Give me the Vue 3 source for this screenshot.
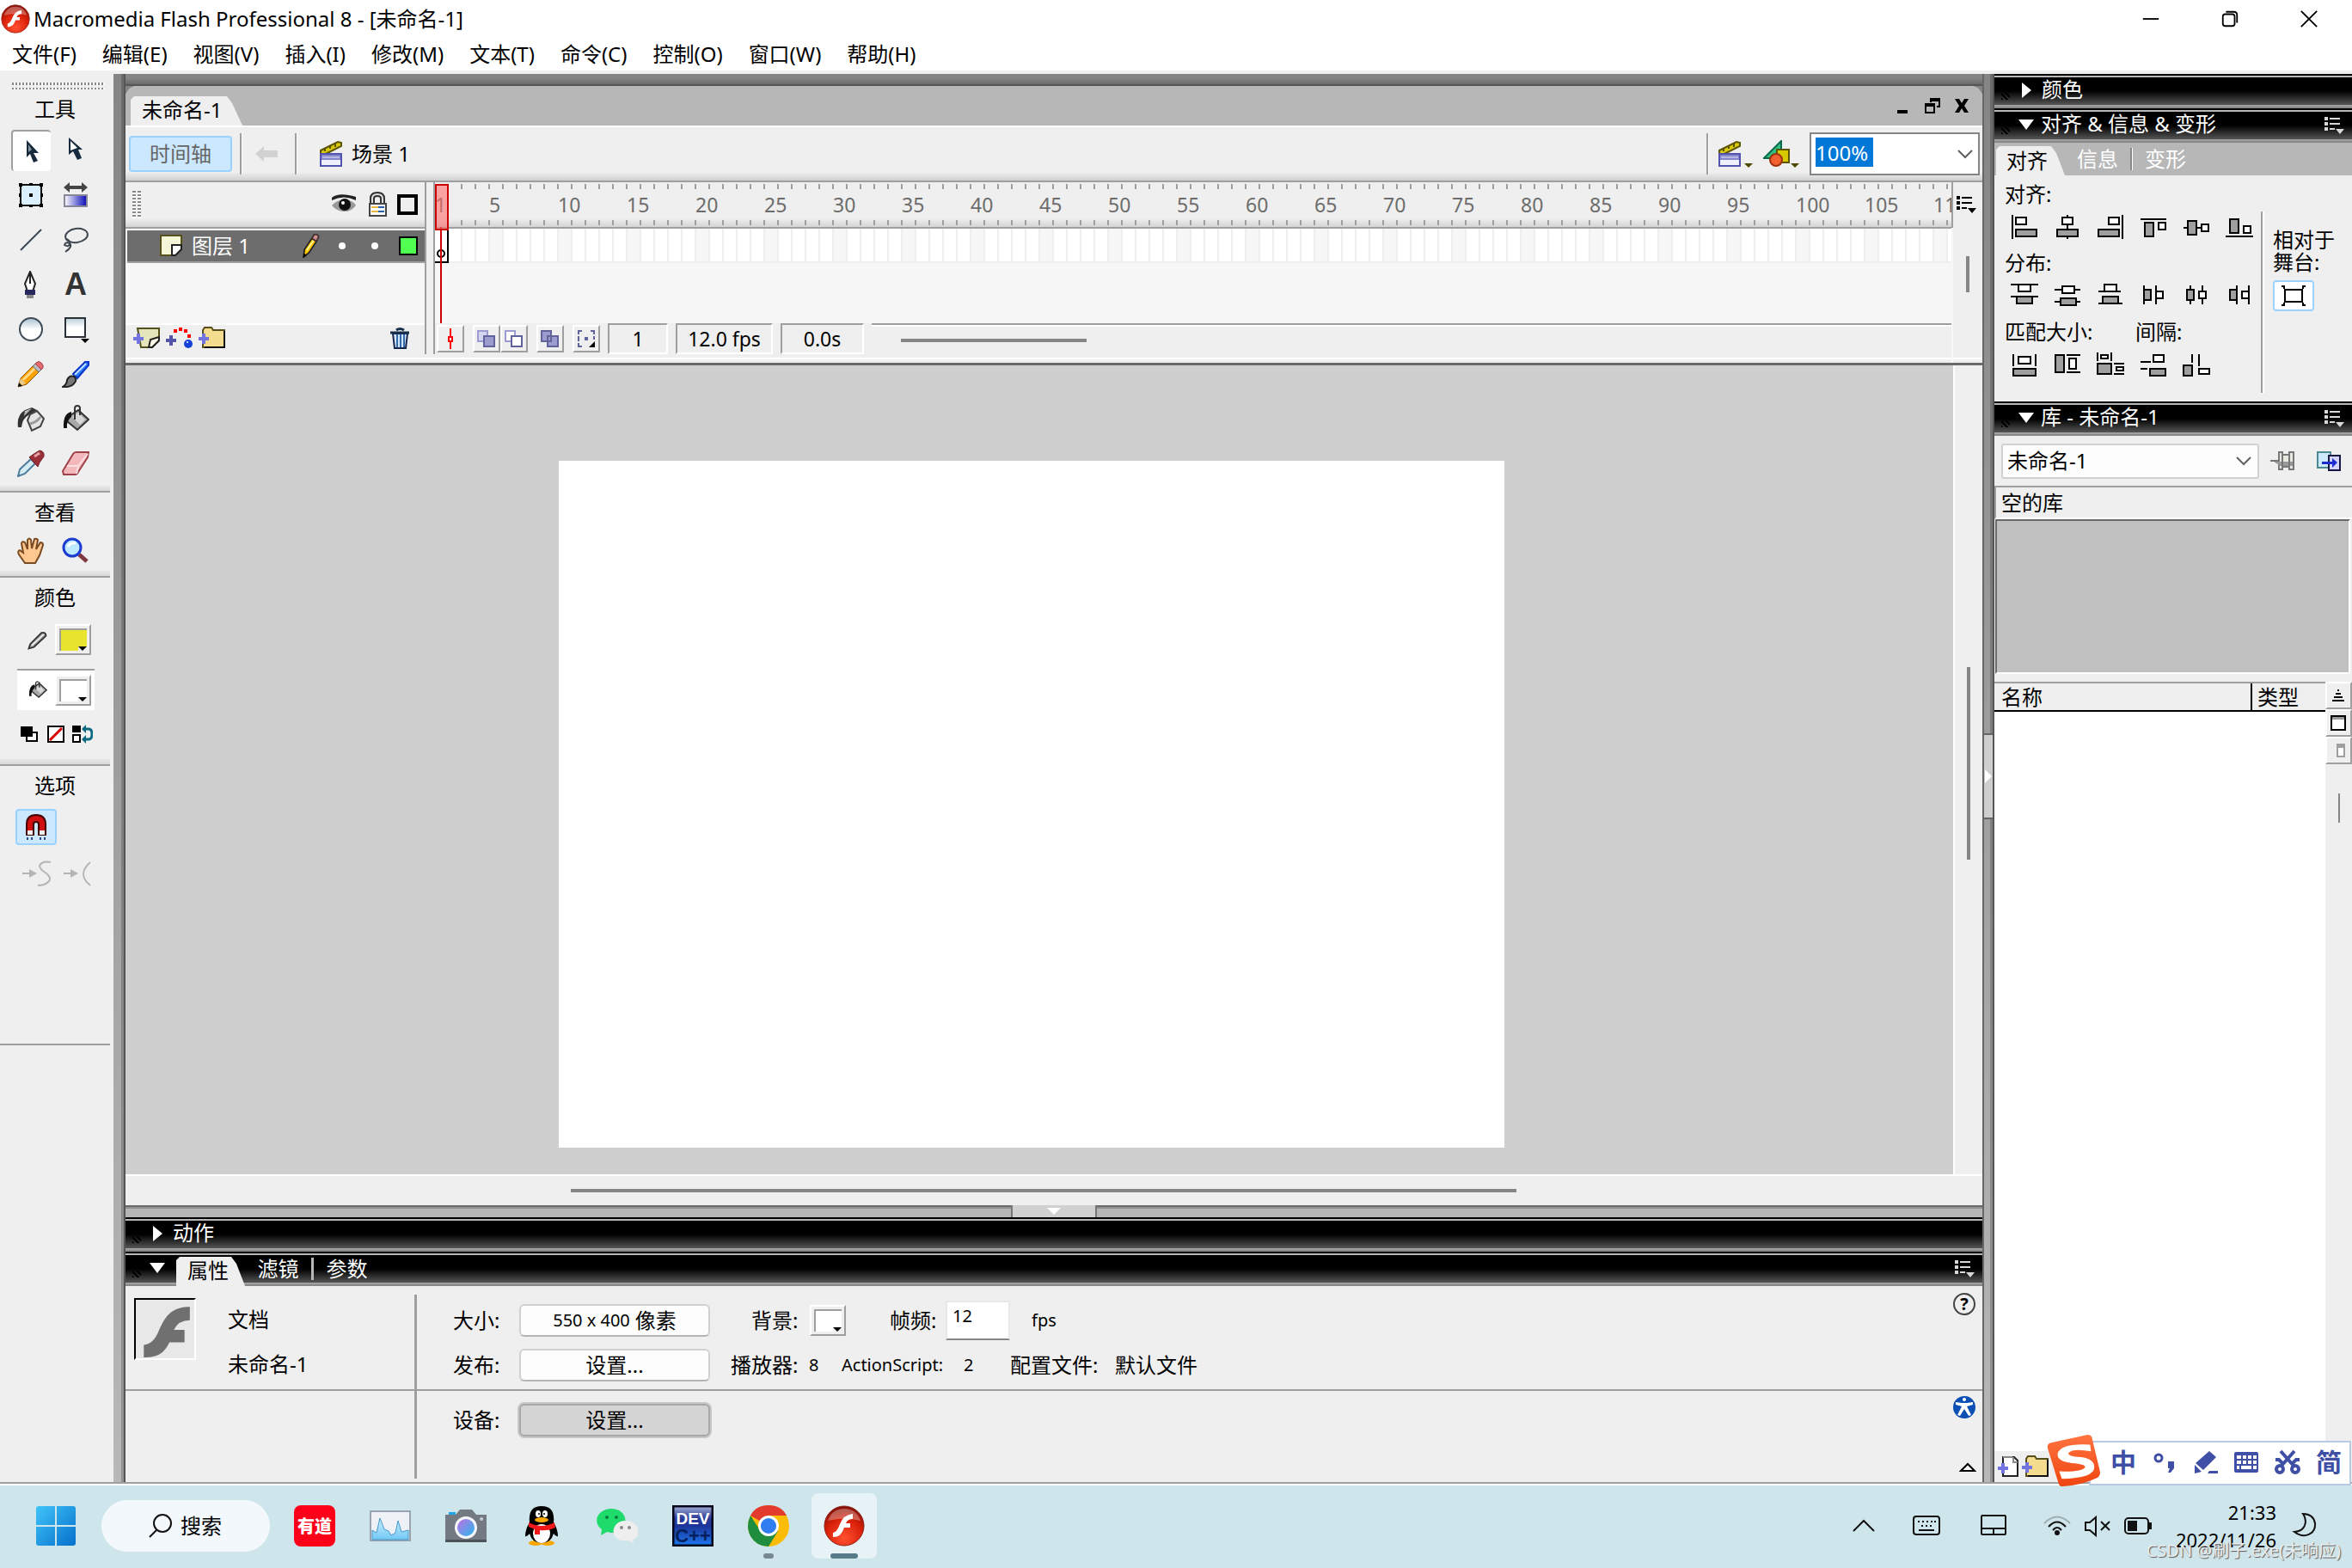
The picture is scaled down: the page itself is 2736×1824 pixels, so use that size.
<template>
  <div class="app">
    <header class="title-bar">
      <svg class="i34" viewBox="0 0 48 48" v-html="icons.flash"></svg>
      <h1>Macromedia Flash Professional 8 - [未命名-1]</h1>
      <div class="window-buttons">
        <button aria-label="最小化"><svg viewBox="0 0 24 24"><path d="M2 12h20" /></svg></button>
        <button aria-label="还原"><svg viewBox="0 0 24 24"><rect x="3" y="6" width="15" height="15" rx="3" /><path d="M7 3h10q4 0 4 4v10" /></svg></button>
        <button aria-label="关闭"><svg viewBox="0 0 24 24"><path d="M2 2l20 20M22 2L2 22" /></svg></button>
      </div>
    </header>
    <nav class="menu-bar">
      <button v-for="m in menus" :key="m">{{ m }}</button>
    </nav>

    <div class="workspace">
      <!-- 工具箱 -->
      <aside class="toolbox">
        <div class="grip-h"></div>
        <h2>工具</h2>
        <div class="tool-grid">
          <button v-for="t in tools" :key="t.icon" :class="{ active: t.active }" :aria-label="t.label">
            <span v-if="t.icon === 'text'" class="letter-tool">A</span>
            <svg v-else class="i32" viewBox="0 0 32 32" v-html="icons[t.icon]"></svg>
          </button>
        </div>
        <div class="sep"></div>
        <h2>查看</h2>
        <div class="tool-grid view-grid">
          <button aria-label="手形工具"><svg class="i32" viewBox="0 0 32 32" v-html="icons.hand"></svg></button>
          <button aria-label="缩放工具"><svg class="i32" viewBox="0 0 32 32" v-html="icons.zoom"></svg></button>
        </div>
        <div class="sep"></div>
        <h2>颜色</h2>
        <div class="color-row">
          <svg class="i28" viewBox="0 0 32 32" v-html="icons.stroke"></svg>
          <button class="swatch yellow" aria-label="笔触颜色"><i></i></button>
        </div>
        <div class="color-row fill">
          <svg class="i28" viewBox="0 0 32 32" v-html="icons.bucketSmall"></svg>
          <button class="swatch" aria-label="填充颜色"><i></i></button>
        </div>
        <div class="mini-row">
          <button aria-label="黑白"><svg class="i24" viewBox="0 0 24 24" v-html="icons.bw"></svg></button>
          <button aria-label="没有颜色"><svg class="i24" viewBox="0 0 24 24" v-html="icons.none"></svg></button>
          <button aria-label="交换颜色"><svg class="i24" viewBox="0 0 24 24" v-html="icons.swap"></svg></button>
        </div>
        <div class="sep"></div>
        <h2>选项</h2>
        <button class="magnet" aria-label="贴紧至对象"><svg class="i32" viewBox="0 0 32 32" v-html="icons.magnet"></svg></button>
        <div class="mini-row smooth-row">
          <button aria-label="平滑"><svg class="i34" viewBox="0 0 34 34" v-html="icons.smooth"></svg></button>
          <button aria-label="伸直"><svg class="i34" viewBox="0 0 34 34" v-html="icons.straight"></svg></button>
        </div>
        <div class="toolbox-end"></div>
      </aside>

      <div class="gutter"></div>

      <main class="center">
        <div class="frame-top"></div>
        <section class="doc">
          <div class="doc-tabs">
            <div class="doc-tab">未命名-1</div>
            <div class="doc-buttons">
              <button aria-label="最小化文档"><svg class="i20" viewBox="0 0 20 20"><path d="M3 15h12v4H3z" /></svg></button>
              <button aria-label="还原文档"><svg class="i20" viewBox="0 0 20 20"><path d="M7 1h12v11h-4v-2h2V5H9v1H7zM1 7h12v12H1zm2 4v6h8v-6z" fill-rule="evenodd" /></svg></button>
              <button aria-label="关闭文档"><svg class="i20" viewBox="0 0 20 20"><path d="M2 2h5l3 5 3-5h5l-5 8 5 8h-5l-3-5-3 5H2l5-8z" /></svg></button>
            </div>
          </div>

          <div class="edit-bar">
            <button class="timeline-toggle">时间轴</button>
            <div class="vline"></div>
            <button class="back" aria-label="后退"><svg class="i28" viewBox="0 0 28 28"><path d="M1 14l10-9v5h16v8H11v5z" fill="#d2d2d2" /></svg></button>
            <div class="vline"></div>
            <svg class="i32 scene-icon" viewBox="0 0 32 32" v-html="icons.clap"></svg>
            <span class="scene-name">场景 1</span>
            <div class="spacer"></div>
            <div class="vline"></div>
            <button class="drop" aria-label="编辑场景"><svg class="i32" viewBox="0 0 32 32" v-html="icons.clap"></svg><i></i></button>
            <button class="drop" aria-label="编辑元件"><svg class="i32" viewBox="0 0 32 32" v-html="icons.symbols"></svg><i></i></button>
            <div class="zoom-box">
              <input type="text" v-model="zoom" aria-label="缩放比例">
              <button aria-label="选择缩放比例"><svg class="i20" viewBox="0 0 20 20" v-html="icons.chevron"></svg></button>
            </div>
          </div>

          <div class="timeline">
            <div class="layers">
              <div class="layer-head">
                <div class="grip-v"></div>
                <svg class="i32" viewBox="0 0 32 32" v-html="icons.eye"></svg>
                <svg class="i32" viewBox="0 0 32 32" v-html="icons.lock"></svg>
                <div class="outline-box"></div>
              </div>
              <div class="layer-row">
                <svg class="i28" viewBox="0 0 28 28" v-html="icons.page"></svg>
                <span class="layer-name">图层 1</span>
                <svg class="i28" viewBox="0 0 28 32" v-html="icons.layerPencil"></svg>
                <b class="dot"></b>
                <b class="dot"></b>
                <div class="layer-color"></div>
              </div>
              <div class="layer-space"></div>
              <div class="layer-foot">
                <button aria-label="插入图层"><svg class="i32" viewBox="0 0 32 28" v-html="icons.newLayer"></svg></button>
                <button aria-label="添加运动引导层"><svg class="i32" viewBox="0 0 32 28" v-html="icons.guide"></svg></button>
                <button aria-label="插入图层文件夹"><svg class="i32" viewBox="0 0 32 28" v-html="icons.newFolder"></svg></button>
                <div class="spacer"></div>
                <button aria-label="删除图层"><svg class="i28" viewBox="0 0 28 28" v-html="icons.trash"></svg></button>
              </div>
            </div>
            <div class="frames">
              <div class="frames-clip">
                <div class="ruler">
                  <span v-for="n in frameNumbers" :key="n" :class="{ first: n === 1 }">{{ n }}</span>
                </div>
                <div class="frame-cells"><div class="keyframe"><b></b></div></div>
                <div class="frames-space"></div>
                <div class="playhead"></div>
              </div>
              <div class="frames-foot">
                <button class="foot-btn" aria-label="滚动到播放头"><svg class="i28" viewBox="0 0 28 28"><path d="M13 2h2v9h2v7h-2v8h-2v-8h-2v-7h2zM13 13v3h2v-3z" fill="#f00" fill-rule="evenodd" /></svg></button>
                <button class="foot-btn gap" aria-label="绘图纸外观"><svg class="i28" viewBox="0 0 28 28"><path d="M4 5h11v12H4z" fill="#d5d5f2" stroke="#9c9cd2" stroke-width="2" /><path d="M11 11h12v12H11z" fill="#9c9cce" stroke="#63639c" stroke-width="2" /></svg></button>
                <button class="foot-btn" aria-label="绘图纸外观轮廓"><svg class="i28" viewBox="0 0 28 28"><path d="M4 5h11v12H4z" fill="#fff" stroke="#9c9cd2" stroke-width="2" /><path d="M11 11h12v12H11z" fill="#fff" stroke="#63639c" stroke-width="2" /></svg></button>
                <button class="foot-btn gap" aria-label="编辑多个帧"><svg class="i28" viewBox="0 0 28 28"><path d="M4 5h11v12H4zM11 11h12v12H11z" fill="#9c9cce" stroke="#63639c" stroke-width="2" /></svg></button>
                <button class="foot-btn gap" aria-label="修改绘图纸标记"><svg class="i28" viewBox="0 0 28 28"><path d="M9 5H5v4M5 11v6M5 19v4h4M19 5h4v4M23 11v4" fill="none" stroke="#63639c" stroke-width="2" /><path d="M12 12h4v4h-4z" fill="#63639c" /><path d="M24 17v7h-7z" /></svg></button>
                <output class="readout frame-no">1</output>
                <output class="readout fps-no">12.0 fps</output>
                <output class="readout time-no">0.0s</output>
                <div class="h-track"><div class="h-thumb"></div></div>
              </div>
            </div>
            <div class="timeline-side">
              <svg class="i24" viewBox="0 0 24 24" v-html="icons.options"></svg>
              <div class="v-thumb"></div>
            </div>
          </div>

          <div class="stage-row">
            <div class="stage"><div class="page"></div></div>
            <div class="v-scroll"><div class="v-thumb"></div></div>
          </div>
          <div class="h-scroll"><div class="h-thumb"></div></div>
        </section>

        <div class="splitter"><button aria-label="折叠面板"></button></div>

        <section>
          <div class="panel-head"><em></em><i class="tri right"></i><h2>动作</h2></div>
          <div class="panel-head">
            <em></em><i class="tri down"></i>
            <button class="prop-tab active">属性</button>
            <button class="prop-tab">滤镜</button>
            <div class="tab-line"></div>
            <button class="prop-tab">参数</button>
            <svg class="i24 head-menu" viewBox="0 0 24 24" v-html="icons.options"></svg>
          </div>
        </section>
        <section class="props">
          <div class="props-top">
            <div class="doc-info">
              <div class="doc-logo"><svg viewBox="0 0 66 66"><path d="M61 8v15q-13 0-18 11h12v14H38C31 62 23 65 9 65V51q11-1 17-16C33 18 41 8 61 8z" /></svg></div>
              <div class="doc-names"><span>文档</span><span>未命名-1</span></div>
            </div>
            <div class="settings">
              <div class="set-row">
                <span class="set-label">大小:</span>
                <button class="push"><small>550 x 400</small> 像素</button>
                <span class="bg-label">背景:</span>
                <button class="swatch bg-swatch" aria-label="背景颜色"><i></i></button>
                <label for="fps" class="fps-label">帧频:</label>
                <input id="fps" type="text" v-model="fps">
                <small class="fps-unit">fps</small>
              </div>
              <div class="set-row">
                <span class="set-label">发布:</span>
                <button class="push">设置...</button>
                <span class="player">播放器:</span>
                <small class="player-no">8</small>
                <small class="as">ActionScript:</small>
                <small class="as-no">2</small>
                <span class="profile">配置文件:</span>
                <span>默认文件</span>
              </div>
            </div>
            <button class="side-icon help" aria-label="帮助">?</button>
          </div>
          <div class="props-bottom">
            <div class="doc-info"></div>
            <div class="settings">
              <div class="set-row device">
                <span class="set-label">设备:</span>
                <button class="push pressed">设置...</button>
              </div>
            </div>
            <div class="side-col">
              <svg class="i28" viewBox="0 0 28 28"><circle cx="14" cy="14" r="13" fill="#0c50b4" /><g fill="#fff"><circle cx="14" cy="5" r="2" /><path d="M4 8l7 1h6l7-1v3l-7 2 5 10-3 1-5-8-5 8-3-1 5-10-7-2z" /></g></svg>
              <svg class="i20" viewBox="0 0 20 20"><path d="M2 14l8-8 8 8z" fill="#fff" stroke="#000" stroke-width="2" /></svg>
            </div>
          </div>
        </section>
      </main>

      <div class="gutter right-gutter"><button aria-label="折叠右侧面板"></button></div>

      <!-- 右侧面板 -->
      <aside class="panels">
        <div class="panel-head"><em></em><i class="tri right"></i><h2>颜色</h2></div>
        <div class="panel-head">
          <em></em><i class="tri down"></i><h2>对齐 &amp; 信息 &amp; 变形</h2>
          <svg class="i24 head-menu" viewBox="0 0 24 24" v-html="icons.options"></svg>
        </div>
        <div class="align-tabs">
          <button class="active">对齐</button>
          <button>信息</button>
          <div class="tab-line"></div>
          <button>变形</button>
        </div>
        <div class="align-body">
          <div class="align-left">
            <div v-for="g in alignGroups" :key="g.label" class="align-group">
              <div class="align-label"><span>{{ g.label }}</span><span v-if="g.extra">{{ g.extra }}</span></div>
              <div class="align-icons">
                <button v-for="(ic, k) in g.icons" :key="k" :aria-label="g.label + (k + 1)">
                  <svg :width="ic.w" height="28" :viewBox="'0 0 ' + ic.w + ' 28'" v-html="ic.d"></svg>
                </button>
              </div>
            </div>
          </div>
          <div class="align-right">
            <p>相对于<br>舞台:</p>
            <button aria-label="相对于舞台"><svg width="32" height="28" viewBox="0 0 32 28"><path d="M6 6h20v14H6z" fill="none" stroke="#000" stroke-width="2" /><path d="M2 2h3v3M30 2h-3v3M2 24h3v-3M30 24h-3v-3" fill="none" stroke="#000" stroke-width="2" /></svg></button>
          </div>
        </div>

        <div class="panel-head">
          <em></em><i class="tri down"></i><h2>库 - 未命名-1</h2>
          <svg class="i24 head-menu" viewBox="0 0 24 24" v-html="icons.options"></svg>
        </div>
        <div class="lib-bar">
          <div class="lib-select">
            <select aria-label="库文档"><option>未命名-1</option></select>
            <svg class="i20" viewBox="0 0 20 20" v-html="icons.chevron"></svg>
          </div>
          <div class="lib-buttons">
            <button aria-label="固定当前库"><svg class="i28" viewBox="0 0 28 28" v-html="icons.pin"></svg></button>
            <button aria-label="新建库面板"><svg class="i28" viewBox="0 0 28 28" v-html="icons.newLib"></svg></button>
          </div>
        </div>
        <div class="lib-status">空的库</div>
        <div class="lib-preview"></div>
        <div class="lib-list">
          <div class="lib-table">
            <table>
              <thead><tr><th>名称</th><th class="type">类型</th></tr></thead>
            </table>
          </div>
          <div class="lib-side">
            <button aria-label="排序"><svg class="i20" viewBox="0 0 20 20"><path d="M9 3h2v2H9zM7 7h6v2H7zM5 11h10v2H5zM3 15h14v2H3z" /></svg></button>
            <button aria-label="宽视图"><svg class="i20" viewBox="0 0 20 20"><path d="M2 2h16v16H2z" fill="#fff" stroke="#000" stroke-width="2" /><path d="M3 3h14v3H3z" fill="#999" /></svg></button>
            <button aria-label="窄视图"><svg class="i20" viewBox="0 0 20 20"><path d="M9 3h8v14H9z" fill="#fff" stroke="#9f9f9f" stroke-width="2" /><path d="M9 3h8v4H9z" fill="#9f9f9f" /></svg></button>
            <div class="thin-thumb"></div>
          </div>
        </div>
        <div class="lib-foot">
          <button aria-label="新建元件"><svg class="i28" viewBox="0 0 28 28"><path d="M6 3h13l4 4v18H6z" fill="#fff" stroke="#222" stroke-width="2" /><path d="M6 3h11" stroke="#888" stroke-width="2" /><path d="M18 3v6h5" fill="none" stroke="#888" stroke-width="2" /><path d="M4 10h4v4h4v4H8v4H4v-4H0v-4h4z" fill="#7474e0" /></svg></button>
          <button aria-label="新建文件夹"><svg class="i32" viewBox="0 0 32 28" v-html="icons.newFolder"></svg></button>
        </div>
      </aside>
    </div>

    <footer class="taskbar">
      <button class="start" aria-label="开始"><svg width="46" height="46" viewBox="0 0 46 46" v-html="icons.windows"></svg></button>
      <button class="search"><svg class="i32" viewBox="0 0 32 32"><circle cx="19" cy="13" r="10" /><path d="M12 21L4 29" /></svg>搜索</button>
      <div class="apps">
        <button v-for="a in apps" :key="a.icon" :class="a.state" :aria-label="a.label">
          <svg width="48" height="48" viewBox="0 0 48 48" v-html="icons[a.icon]"></svg>
        </button>
      </div>
      <div class="spacer"></div>
      <div class="tray">
        <button class="t-up" aria-label="显示隐藏的图标"><svg class="i28" viewBox="0 0 28 28"><path d="M2 20l12-12 12 12" /></svg></button>
        <button class="t-key" aria-label="触摸键盘"><svg class="i32" viewBox="0 0 32 32"><rect x="1" y="5" width="30" height="21" rx="3" /><path d="M6 11h2m3 0h2m3 0h2m3 0h2m2 0h2M10 16h2m3 0h2m3 0h2M7 21h18" /></svg></button>
        <button class="t-pad" aria-label="触摸板"><svg class="i32" viewBox="0 0 32 32"><rect x="1" y="4" width="28" height="22" rx="1" /><path d="M1 19h28M15 19v7" /></svg></button>
        <button class="t-net" aria-label="网络和声音">
          <svg class="i32" viewBox="0 0 32 32"><path d="M1 13q15-15 30 0" opacity=".25" /><path d="M6 17q10-11 20 0M11 21q5-6 10 0" /><circle cx="16" cy="24" r="2" fill="#111" /></svg>
          <svg class="i32" viewBox="0 0 32 32"><path d="M2 12h5l7-6v21l-7-6H2zM20 11l10 10M30 11L20 21" /></svg>
          <svg class="i32" viewBox="0 0 32 32"><rect x="1" y="7" width="27" height="18" rx="4" /><path d="M5 11h9v10H5z" fill="#111" /><path d="M29 13h2v6h-2z" /></svg>
        </button>
        <div class="clock"><time>21:33</time><time>2022/11/26</time></div>
        <svg class="i32 moon" viewBox="0 0 32 32"><path d="M14 2q12 0 14 11c1 12-12 19-24 10q12-1 13-12 0-5-3-9z" /></svg>
      </div>
    </footer>

    <!-- 输入法状态栏 -->
    <div class="ime">
      <svg class="ime-logo" viewBox="0 0 66 66" v-html="icons.sogou"></svg>
      <button>中</button>
      <button aria-label="中文标点"><svg class="i32" viewBox="0 0 32 32"><circle cx="9" cy="11" r="4" fill="none" stroke="#3f4fa5" stroke-width="3" /><path d="M20 15h7v8l-4 5h-3l2-5h-2z" /></svg></button>
      <button aria-label="手写"><svg class="i32" viewBox="0 0 32 32"><path d="M20 3l8 7-15 15-9-8zM3 19l8 8-8 2zM20 26h10v3H18z" /></svg></button>
      <button aria-label="软键盘"><svg class="i32" viewBox="0 0 32 32"><path d="M4 4h24q2 0 2 2v20q0 2-2 2H4q-2 0-2-2V6q0-2 2-2zm1 4v4h5V8zm7 0v4h4V8zm6 0v4h4V8zm6 0v4h4V8zM5 14v4h5v-4zm7 0v4h4v-4zm6 0v4h4v-4zm6 0v4h4v-4zM5 20v4h3v-4zm5 0v4h12v-4zm14 0v4h4v-4z" fill-rule="evenodd" /></svg></button>
      <button aria-label="截图"><svg class="i32" viewBox="0 0 32 32"><g fill="none" stroke="#3f4fa5" stroke-width="4"><circle cx="7" cy="24" r="4" /><circle cx="25" cy="24" r="4" /><path d="M9 20L24 3M23 20L8 3M2 13h4l5 5M30 13h-4l-5 5" /></g></svg></button>
      <button>简</button>
    </div>
    <div class="watermark">CSDN @刷子.exe(未响应)</div>
  </div>
</template>

<script setup>
import { ref } from 'vue'

const zoom = ref('100%')
const fps = ref('12')

const menus = ['文件(F)', '编辑(E)', '视图(V)', '插入(I)', '修改(M)', '文本(T)', '命令(C)', '控制(O)', '窗口(W)', '帮助(H)']

const tools = [
  { icon: 'arrow', label: '选择工具', active: true },
  { icon: 'subselect', label: '部分选取工具' },
  { icon: 'transform', label: '任意变形工具' },
  { icon: 'gradient', label: '填充变形工具' },
  { icon: 'line', label: '线条工具' },
  { icon: 'lasso', label: '套索工具' },
  { icon: 'pen', label: '钢笔工具' },
  { icon: 'text', label: '文本工具' },
  { icon: 'oval', label: '椭圆工具' },
  { icon: 'rect', label: '矩形工具' },
  { icon: 'pencil', label: '铅笔工具' },
  { icon: 'brush', label: '刷子工具' },
  { icon: 'ink', label: '墨水瓶工具' },
  { icon: 'bucket', label: '颜料桶工具' },
  { icon: 'dropper', label: '滴管工具' },
  { icon: 'eraser', label: '橡皮擦工具' }
]

const frameNumbers = [1]
for (let n = 5; n <= 110; n += 5) frameNumbers.push(n)

const apps = [
  { icon: 'youdao', label: '有道' },
  { icon: 'chart', label: '资源监视器' },
  { icon: 'camera', label: '相机' },
  { icon: 'qq', label: 'QQ' },
  { icon: 'wechat', label: '微信' },
  { icon: 'dev', label: 'Dev-C++' },
  { icon: 'chrome', label: 'Chrome', state: 'running' },
  { icon: 'flash', label: 'Flash', state: 'current' }
]

// bar: 实心线条, box: 2px 黑边方块
const bar = (x, y, w, h) => `<rect x="${x}" y="${y}" width="${w}" height="${h}"/>`
const box = (x, y, w, h, fill = '#fff') =>
  `<rect x="${x + 1}" y="${y + 1}" width="${w - 2}" height="${h - 2}" fill="${fill}" stroke="#000" stroke-width="2"/>`
const gray = '#9f9f9f'

const alignGroups = [
  {
    label: '对齐:',
    icons: [
      { w: 30, d: bar(0, 0, 2, 28) + box(4, 2, 14, 10) + box(4, 16, 26, 10, gray) },
      { w: 26, d: bar(12, 0, 2, 28) + box(6, 2, 14, 10) + box(0, 16, 26, 10, gray) },
      { w: 30, d: bar(28, 0, 2, 28) + box(12, 2, 14, 10) + box(0, 16, 26, 10, gray) },
      { w: 30, d: bar(0, 4, 30, 2) + box(4, 8, 12, 18, gray) + box(20, 8, 10, 10) },
      { w: 30, d: bar(0, 14, 30, 2) + box(4, 6, 12, 18, gray) + box(20, 10, 10, 10) },
      { w: 32, d: bar(0, 24, 32, 2) + box(4, 4, 12, 18, gray) + box(20, 12, 10, 10) }
    ]
  },
  {
    label: '分布:',
    icons: [
      { w: 32, d: bar(0, 0, 32, 2) + box(8, 0, 16, 10) + bar(0, 14, 32, 2) + box(6, 14, 20, 10, gray) },
      { w: 30, d: bar(0, 6, 30, 2) + box(8, 2, 16, 10) + bar(0, 20, 30, 2) + box(6, 16, 20, 10, gray) },
      { w: 28, d: bar(0, 8, 26, 2) + box(6, 0, 16, 10) + bar(0, 22, 28, 2) + box(4, 14, 20, 10, gray) },
      { w: 24, d: bar(0, 2, 2, 22) + box(0, 6, 10, 14, gray) + bar(14, 2, 2, 22) + box(14, 8, 10, 10) },
      { w: 24, d: bar(4, 2, 2, 22) + box(0, 6, 10, 14, gray) + bar(18, 2, 2, 22) + box(14, 8, 10, 10) },
      { w: 24, d: bar(8, 2, 2, 22) + box(0, 6, 10, 14, gray) + bar(22, 2, 2, 22) + box(14, 8, 10, 10) }
    ]
  },
  {
    label: '匹配大小:',
    extra: '间隔:',
    icons: [
      { w: 28, d: bar(0, 2, 2, 14) + box(6, 4, 16, 10) + bar(26, 2, 2, 14) + box(0, 18, 28, 10, gray) },
      { w: 30, d: box(0, 2, 12, 22, gray) + bar(14, 2, 16, 2) + box(16, 6, 10, 14) + bar(14, 22, 16, 2) },
      { w: 32, d: bar(0, 0, 2, 10) + box(4, 2, 10, 6) + bar(16, 0, 2, 10) + box(0, 12, 18, 14, gray) + bar(20, 12, 12, 2) + box(22, 16, 10, 6) + bar(20, 24, 12, 2) },
      { w: 30, d: bar(0, 10, 12, 2) + box(14, 2, 14, 10) + bar(0, 18, 8, 2) + box(10, 18, 20, 10, gray) },
      { w: 32, d: bar(10, 2, 2, 10) + bar(18, 2, 2, 14) + box(0, 14, 12, 14, gray) + box(18, 18, 14, 8) }
    ]
  }
]

const bucketShape = '<path d="M10 12L19 6l12 11-13 12L6 19z" fill="#a8a8a8" stroke="#333" stroke-width="2"/><path d="M12 14l9 9 6-6-8-8z" fill="#d8d8d8"/><path d="M11 8q-10 2-9 19h4q-1-9 5-13z" fill="#111"/>'

const icons = {
  arrow: '<path d="M10 3v20l4-4 4 10 5-2-5-9h6z" fill="#17293d"/><path d="M12 8v9l4-3z" fill="#8795a1"/>',
  subselect: '<path d="M8 1v20l5-4 5 10 5-2-4-10h5z" fill="#17293d"/><path d="M10 5v11l8-3z" fill="#fff"/>',
  transform: '<path d="M4 4h24v24H4z" fill="#daf1fd" stroke="#111" stroke-width="2"/><path d="M2 2h4v4H2zM14 2h4v3h-4zM26 2h4v4h-4zM2 14h3v4H2zM27 14h3v4h-3zM2 26h4v4H2zM14 27h4v3h-4zM26 26h4v4h-4zM14 14h4v4h-4z"/>',
  gradient: '<defs><linearGradient id="gb"><stop offset="0" stop-color="#fff"/><stop offset="1" stop-color="#0808b8"/></linearGradient></defs><path d="M2 7l7-6v4h14V1l7 6-7 6V9H9v4z" fill="#444"/><rect x="3" y="16" width="26" height="13" fill="url(#gb)" stroke="#889" stroke-width="2"/>',
  line: '<path d="M4 28L28 4" stroke="#3c4650" stroke-width="2"/>',
  lasso: '<g fill="none" stroke="#3e4650" stroke-width="2"><ellipse cx="17" cy="11" rx="13" ry="8" transform="rotate(-8 17 11)"/><path d="M5 15q5 2 4 6t-6 1q1-4 6-2 4 4-5 10"/></g>',
  pen: '<path d="M15 1l6 14-3 9h-6L9 15z" fill="#fff" stroke="#222" stroke-width="2"/><path d="M15 3v12" stroke="#222" stroke-width="2"/><path d="M9 22h12v6H9z" fill="#28285e"/><path d="M11 28h8v4h-8z" fill="#888"/>',
  oval: '<defs><linearGradient id="og" x2="0" y2="1"><stop offset=".1" stop-color="#b7cdd8"/><stop offset=".5" stop-color="#fff"/></linearGradient></defs><circle cx="16" cy="16" r="13" fill="url(#og)" stroke="#3f4b57" stroke-width="2"/>',
  rect: '<defs><linearGradient id="rg" x2="0" y2="1"><stop offset="0" stop-color="#b7cdd8"/><stop offset=".5" stop-color="#fff"/></linearGradient></defs><path d="M4 3h23v22H4z" fill="url(#rg)" stroke="#2a3038" stroke-width="2"/><path d="M22 27h10l-5 5z"/>',
  pencil: '<path d="M1 31l3-10L20 5l7 7-16 16z" fill="#ffa200" stroke="#8a5a10"/><path d="M6 22L20 8l2 2L8 24z" fill="#ffd98a"/><path d="M18 7l4-4 7 7-4 4z" fill="#b8bcc0" stroke="#666"/><path d="M22 3q3-3 6 0t2 6l-2 2-7-7z" fill="#e86a70" stroke="#a04048"/><path d="M1 31l3-10 6 6z" fill="#e8c98a"/><path d="M1 31l1-5 4 4z"/>',
  layerPencil: '<path d="M4 31l1-10L15 6l6 4-10 15z" fill="#ffc800" stroke="#222" stroke-width="2"/><path d="M15 6l3-5q5-1 6 3l-3 6z" fill="#d09090" stroke="#403030" stroke-width="2"/><path d="M8 22l9-13" stroke="#fff4a0" stroke-width="2"/><path d="M3 32l1-6 4 2z"/>',
  brush: '<path d="M13 16L27 2h4v4L18 21z" fill="#2a78ff" stroke="#0a36c8" stroke-width="2"/><path d="M15 17L28 4" stroke="#bfe0ff" stroke-width="2"/><path d="M1 31q5-3 5-8 3-6 8-4 4 3 1 7-4 6-14 5z" fill="#777" stroke="#222" stroke-width="2"/>',
  ink: '<path d="M1 26q-2-14 8-20l8-3 6 3-10 6q-7 4-8 14z" fill="#333"/><path d="M9 7l8-3-9 9z" fill="#bbb"/><path d="M12 18l3-7 8-4 8 9-4 9-10 5z" fill="#e4e4e4" stroke="#444" stroke-width="2"/><path d="M15 22q8-2 12-8" stroke="#999" stroke-width="3" fill="none"/>',
  bucket: bucketShape + '<path d="M15 17V4q0-3 3-3t3 3v8" fill="none" stroke="#333" stroke-width="2"/>',
  bucketSmall: '<g transform="translate(4 2) scale(.8)">' + bucketShape + '<path d="M13 16V5q2-4 6 0v8" fill="none" stroke="#333" stroke-width="2"/></g>',
  dropper: '<path d="M1 31l2-8 13-12 5 5L9 28z" fill="#d5ecf5" stroke="#4c7c9c" stroke-width="2"/><path d="M14 9l4-3 8-5q6 1 5 7l-5 7-2 5z" fill="#9c3038" stroke="#702028"/><path d="M20 8l6-4" stroke="#e8a0a8" stroke-width="3"/>',
  eraser: '<path d="M1 25L13 5q1-2 4-2h14l-1 6-11 17q-1 3-4 3H2z" fill="#f2b8bc" stroke="#a04048" stroke-width="2"/><path d="M6 19h13L30 5M19 19l-2 9" fill="none" stroke="#fbe0e2" stroke-width="2"/>',
  hand: '<path d="M9 30l-7-10q-2-4 1-5l4 3-2-11q1-3 4-1l3 8V3q2-3 4 0l1 10 3-11q3-1 4 1l-2 11 5-8q3 0 3 3l-4 12-5 9z" fill="#ffc890" stroke="#7a4a20" stroke-width="2"/>',
  zoom: '<path d="M20 20l9 8" stroke="#803840" stroke-width="5"/><circle cx="12" cy="12" r="10" fill="#bdeaff" stroke="#1c3cd0" stroke-width="3"/><path d="M7 11q3-5 9-4" stroke="#fff" stroke-width="3" fill="none"/>',
  stroke: '<path d="M5 28l2-6L22 7q6-1 6 4L12 26z" fill="#999" stroke="#333" stroke-width="2"/><path d="M9 24L25 9" stroke="#eee" stroke-width="2"/>',
  bw: box(8, 9, 14, 12) + '<rect x="2" y="3" width="14" height="12"/>',
  none: '<path d="M3 3h18v18H3z" fill="#fff" stroke="#000" stroke-width="2"/><path d="M5 19L19 5" stroke="#d80000" stroke-width="3"/>',
  swap: '<path d="M0 2h10v8H0z"/>' + box(0, 12, 10, 10) + '<path d="M13 6h6q4 0 4 6t-4 6h-6" fill="none" stroke="#0c6a80" stroke-width="3"/><path d="M16 1v10l-5-5zM16 13v10l-5-5z" fill="#0c6a80"/>',
  magnet: '<path d="M5 25V13Q5 2 16 2t11 11v12h-8V13q0-3-3-3t-3 3v12z" fill="#d01010" stroke="#400" stroke-width="2"/><path d="M6 20h6v5H6zM20 20h6v5h-6z" fill="#eee"/><path d="M6 28v3M11 28v3M21 28v3M26 28v3" stroke="#28488c" stroke-width="2"/>',
  smooth: '<path d="M0 17h10" stroke="#b5b5b5" stroke-width="2"/><path d="M8 12l9 5-9 5z" fill="#b5b5b5"/><path d="M33 4q-10-2-13 4 0 4 8 9 7 6 2 10-4 4-12 4" fill="none" stroke="#b5b5b5" stroke-width="2"/>',
  straight: '<path d="M0 17h10" stroke="#b5b5b5" stroke-width="2"/><path d="M8 12l9 5-9 5z" fill="#b5b5b5"/><path d="M31 4q-16 14 0 27" fill="none" stroke="#b5b5b5" stroke-width="2"/>',
  chevron: '<path d="M2 6l8 8 8-8" fill="none" stroke="#606060" stroke-width="2"/>',
  options: '<path d="M0 2h4v4H0zM6 3h12v2H6zM0 8h4v4H0zM6 9h12v2H6zM0 14h4v4H0zM6 15h6v2H6zM13 16h10l-5 6z" fill="currentColor"/>',
  clap: '<path d="M3 12L23 2l4 1v4L7 17H3z" fill="#d8c810" stroke="#5c5400" stroke-width="2"/><path d="M8 9v4M14 6v4M20 4v4" stroke="#5c5400" stroke-width="2"/><path d="M3 16h24v14H3z" fill="#f0f0fc" stroke="#5252b0" stroke-width="2"/><path d="M4 17h22v6H4z" fill="#8686cc"/><path d="M5 20h20" stroke="#e8e8ff" stroke-width="1"/>',
  symbols: '<path d="M21 1v20H1z" fill="#2ec080" stroke="#0a6a50" stroke-width="2"/><path d="M16 11h14v15H16z" fill="#d8c800" stroke="#5c5400" stroke-width="2"/><circle cx="15" cy="23" r="7" fill="#f06030" stroke="#a03010" stroke-width="2"/>',
  eye: '<path d="M2 8q8-7 28-1v4Q16 4 2 11z" fill="#222"/><path d="M2 17q8-9 20-6 6 2 8 6-6 8-15 7-8-1-13-7z" fill="#999"/><circle cx="17" cy="16" r="7" fill="#111"/><circle cx="15" cy="14" r="2" fill="#fff"/>',
  lock: '<path d="M10 15V9q0-5 6-5t6 5v6" fill="none" stroke="#333" stroke-width="6"/><path d="M10 15V9q0-5 6-5t6 5v6" fill="none" stroke="#ddd" stroke-width="2"/><rect x="7" y="15" width="19" height="14" fill="#fff" stroke="#444" stroke-width="2"/><path d="M9 19h8M9 24h8" stroke="#e8b840" stroke-width="2"/><path d="M17 19h7M17 24h7" stroke="#2860b0" stroke-width="2"/>',
  page: '<path d="M2 2h24v16l-7 7H2z" fill="#f5f5d8" stroke="#55501c" stroke-width="2"/><path d="M26 13H15v12h4l7-7z" fill="#fff" stroke="#222" stroke-width="2"/>',
  newLayer: '<path d="M5 3h25v14l-8 8H9z" fill="#e6e6bc" stroke="#55501c" stroke-width="2"/><path d="M30 13l-10 3-2 9h4l8-8z" fill="#ffffe8" stroke="#222" stroke-width="2"/><path d="M4 9h4v4h4v4H8v4H4v-4H0v-4h4z" fill="#7474e0"/>',
  guide: '<path d="M9 4h4v4H9zM15 2h4v4h-4zM21 4h4v4h-4zM25 10h4v4h-4z" fill="#f00"/><path d="M4 11h4v4h4v4H8v4H4v-4H0v-4h4z" fill="#5454a8"/><circle cx="26" cy="21" r="5" fill="#1440d8"/><circle cx="25" cy="19" r="1" fill="#fff"/>',
  newFolder: '<path d="M5 5l2-3h8l2 3h13v20H5z" fill="#f3dc8e" stroke="#55501c" stroke-width="2"/><path d="M30 6v19H7" fill="none" stroke="#111" stroke-width="2"/><path d="M4 9h4v4h4v4H8v4H4v-4H0v-4h4z" fill="#7474e0"/>',
  trash: '<path d="M6 9h17l-2 17H8z" fill="#d0e8ff" stroke="#18244c" stroke-width="2"/><path d="M11 10v15M15 10v15M19 10v15" stroke="#3468a8" stroke-width="2"/><path d="M3 8h22M10 5q4-3 9 0" stroke="#18304c" stroke-width="3" fill="none"/>',
  pin: '<path d="M0 14h10" stroke="#777" stroke-width="2"/><path d="M10 4h4v3h8V4h5v20h-5v-3h-8v3h-4z" fill="#e8e8e0" stroke="#777" stroke-width="2"/><path d="M4 15h22v5H12z" fill="#999"/><path d="M14 8v12M22 8v12" stroke="#777" stroke-width="2"/>',
  newLib: '<path d="M1 4h15v18H1z" fill="#cdeafa" stroke="#4a8a90" stroke-width="2"/><path d="M14 8h13v17H14z" fill="#d4d4fa" stroke="#181848" stroke-width="2"/><path d="M6 15h12v-4l6 5-6 6v-4H6z" fill="#1c2cd0"/>',
  windows: '<defs><linearGradient id="wg" x2="1" y2="1"><stop offset="0" stop-color="#3fc4f8"/><stop offset="1" stop-color="#0670cc"/></linearGradient></defs><path d="M3 0h19v22H0V3q0-3 3-3zM24 0h19q3 0 3 3v19H24zM0 24h22v22H3q-3 0-3-3zM24 24h22v19q0 3-3 3H24z" fill="url(#wg)"/>',
  flash: '<defs><radialGradient id="fg" cx=".5" cy=".8" r=".8"><stop offset="0" stop-color="#ff5030"/><stop offset=".6" stop-color="#d82008"/><stop offset="1" stop-color="#801008"/></radialGradient></defs><circle cx="24" cy="24" r="23" fill="url(#fg)" stroke="#8c2018" stroke-width="1"/><path d="M5 18Q10 4 24 4t19 14q-18-5-38 0z" fill="#fff" opacity=".3"/><path d="M34 10v6q-6 0-8 5h5v5h-7c-3 8-6 11-13 11v-5q5-1 8-10 4-11 15-12z" fill="#fff"/>',
  youdao: '<rect width="48" height="48" rx="8" fill="#fc0019"/><text x="24" y="32" text-anchor="middle" font-size="20" font-weight="900" font-family="Noto Sans CJK SC, sans-serif" fill="#fff">有道</text>',
  chart: '<defs><linearGradient id="cg" x2="0" y2="1"><stop offset="0" stop-color="#d0f0ff"/><stop offset="1" stop-color="#70c8f4"/></linearGradient></defs><path d="M1 7h46v34H1z" fill="#eef2f6" stroke="#98a4b0" stroke-width="2"/><path d="M3 40V29l5 3 4-17 5 13 5 2 3 5 5-3 3-14 4 13 8-2v11z" fill="url(#cg)" stroke="#4498cc" stroke-width="1"/>',
  camera: '<defs><linearGradient id="lens" x2="1" y2="1"><stop offset="0" stop-color="#c070e0"/><stop offset="1" stop-color="#28b8f0"/></linearGradient></defs><path d="M4 8h8v5H4z" fill="#20a4e4"/><path d="M0 11h12l5-6h14l5 6h12v32H0z" fill="#737a82"/><path d="M0 40h48v3H0z" fill="#4c5258"/><circle cx="24" cy="26" r="13" fill="#f4f6fa"/><circle cx="24" cy="26" r="10" fill="url(#lens)"/><circle cx="42" cy="16" r="2" fill="#c8ccd0"/>',
  qq: '<ellipse cx="17" cy="44" rx="8" ry="3" fill="#f8a800"/><ellipse cx="31" cy="44" rx="8" ry="3" fill="#f8a800"/><path d="M10 20Q8 1 24 1t14 19q5 8 5 16-2 1-5-3-3 11-14 11T10 33q-3 4-5 3 0-8 5-16z"/><ellipse cx="24" cy="33" rx="10" ry="11" fill="#fff"/><path d="M9 20q15 8 30 0l1 6q-8 4-18 3v5h-6v-6l-7-3z" fill="#f01818"/><ellipse cx="20" cy="10" rx="3" ry="4" fill="#fff"/><ellipse cx="28" cy="10" rx="3" ry="4" fill="#fff"/><circle cx="21" cy="10" r="1"/><circle cx="27" cy="10" r="1"/><ellipse cx="24" cy="17" rx="8" ry="3" fill="#f8a800"/>',
  wechat: '<path d="M17 4c22 0 22 28 0 28l-5-1-7 4 1-7C-6 19 2 4 17 4z" fill="#1fdb6c"/><circle cx="12" cy="14" r="2" fill="#0a7c3c"/><circle cx="23" cy="14" r="2" fill="#0a7c3c"/><path d="M33 18c19 0 19 20 9 22l1 4-6-3c-24 3-21-23-4-23z" fill="#eee"/><circle cx="29" cy="26" r="2" fill="#888"/><circle cx="38" cy="26" r="2" fill="#888"/>',
  dev: '<defs><linearGradient id="dg" x2="0" y2="1"><stop offset="0" stop-color="#a8b4d8"/><stop offset=".3" stop-color="#2c3c98"/><stop offset=".5" stop-color="#1c3498"/><stop offset="1" stop-color="#1c78f0"/></linearGradient></defs><rect x="1" y="1" width="46" height="46" fill="url(#dg)" stroke="#05051c" stroke-width="3"/><text x="24" y="22" text-anchor="middle" font-size="19" font-weight="700" font-family="Liberation Sans, sans-serif" fill="#fff">DEV</text><text x="24" y="43" text-anchor="middle" font-size="22" font-weight="700" font-family="Liberation Sans, sans-serif" fill="#05205c">C++</text>',
  chrome: '<circle cx="24" cy="24" r="24" fill="#fbbc05"/><path d="M24 24L3 12Q9 0 24 0t21 12H24z" fill="#e33b2e"/><path d="M3 12Q-3 24 3 36q7 12 21 12l11-18-11-6-10 5z" fill="#1e8e3e"/><circle cx="24" cy="24" r="12" fill="#fff"/><circle cx="24" cy="24" r="9" fill="#2f7df0"/>',
  sogou: '<defs><linearGradient id="sg" x2="0" y2="1"><stop offset="0" stop-color="#ff7440"/><stop offset="1" stop-color="#ef4410"/></linearGradient></defs><path d="M5 13L50 3q4 0 5 3l10 42q0 5-4 7Q42 64 20 65q-4 0-5-4L2 19q-1-4 3-6z" fill="url(#sg)"/><path d="M53 15l1 8q-22-4-27 2-1 4 15 5 16 2 16 12 0 13-39 14l-3-9q27 1 31-5 0-4-16-5-18-2-17-11 3-13 39-11z" fill="#fff"/>'
}
</script>

<style>
body {
  background: #efefef;
}
</style>

<style scoped>
.app {
  position: relative;
  min-height: 100vh;
  display: flex;
  flex-direction: column;
  overflow: hidden;
  background: #efefef;
  color: #000;
  font-family: "Noto Sans", "Noto Sans CJK SC", sans-serif;
  font-size: 24px;
  line-height: 28px;
}

.app * {
  box-sizing: border-box;
}

button,
input,
select {
  font: inherit;
  color: inherit;
  border: 0;
  padding: 0;
  margin: 0;
  background: none;
  border-radius: 0;
}

button {
  display: flex;
  align-items: center;
  justify-content: center;
  white-space: nowrap;
}

h1,
h2,
p {
  margin: 0;
  font-size: 24px;
  font-weight: 400;
}

svg {
  display: block;
  flex: none;
}

small {
  font-size: 20px;
}

.i20 { width: 20px; height: 20px; }
.i24 { width: 24px; height: 24px; }
.i28 { width: 28px; height: 28px; }
.i32 { width: 32px; height: 32px; }
.i34 { width: 34px; height: 34px; }

.spacer {
  flex: 1;
}

/* 标题栏和菜单 */
.title-bar {
  display: flex;
  align-items: center;
  height: 46px;
  padding: 0 4px 2px 1px;
  gap: 4px;
  background: #fff;
}

.title-bar h1 {
  flex: 1;
}

.window-buttons {
  display: flex;
}

.window-buttons button {
  width: 92px;
  height: 44px;
}

.window-buttons svg {
  width: 22px;
  height: 22px;
  fill: none;
  stroke: #000;
  stroke-width: 2;
}

.menu-bar {
  display: flex;
  gap: 30px;
  height: 36px;
  padding: 0 0 2px 14px;
  background: #fff;
}

.workspace {
  flex: 1;
  display: flex;
  padding-top: 4px;
  border-bottom: 2px solid #9f9f9f;
}

/* 工具箱 */
.toolbox {
  flex: none;
  width: 132px;
  padding-top: 10px;
}

.toolbox h2 {
  width: 128px;
  line-height: 24px;
  margin: 11px 0 10px;
  text-align: center;
}

.grip-h {
  width: 108px;
  height: 8px;
  margin-left: 14px;
  background:
    linear-gradient(#efefef, #efefef) 0 3px / 100% 3px no-repeat,
    repeating-linear-gradient(90deg, #888 0 2px, #fff 2px 4px);
}

.tool-grid {
  display: grid;
  grid-template-columns: 52px 52px;
  grid-auto-rows: 52px;
  padding-left: 10px;
}

.tool-grid button {
  margin: 2px 3px;
}

.tool-grid .active {
  background: #fff;
  border-top: 2px solid #9f9f9f;
  border-left: 2px solid #9f9f9f;
  border-radius: 4px;
}

.view-grid {
  grid-auto-rows: 46px;
}

.letter-tool {
  font-family: "Liberation Sans", sans-serif;
  font-size: 36px;
  font-weight: 700;
  color: #333;
}

.sep {
  width: 128px;
  height: 8px;
  background: linear-gradient(#e8e8e8, #d8d8d8);
  border-bottom: 2px solid #9f9f9f;
}

.color-row {
  display: flex;
  align-items: center;
  width: 90px;
  height: 48px;
  margin: 13px 0 0 20px;
  padding-left: 9px;
  gap: 7px;
}

.color-row.fill {
  margin-top: 10px;
  background: #fff;
  border-top: 2px solid #9f9f9f;
}

.swatch {
  width: 42px;
  height: 36px;
  padding: 3px;
  border: 2px solid #fff;
  border-right-color: #9f9f9f;
  border-bottom-color: #9f9f9f;
  background: #efefef;
}

.swatch i {
  display: flex;
  justify-content: flex-end;
  align-items: flex-end;
  width: 100%;
  height: 100%;
  border-top: 2px solid #9f9f9f;
  border-left: 2px solid #9f9f9f;
  background: #fff;
}

.swatch i::after {
  content: "";
  border: 5px solid #efefef;
  border-width: 5px 5px 0;
  border-top-color: #000;
}

.swatch.yellow i {
  background: #e8e42e;
}

.mini-row {
  display: flex;
  gap: 7px;
  padding: 16px 0 17px 22px;
}

.magnet {
  width: 48px;
  height: 42px;
  margin: 15px 0 0 18px;
  background: #cce8ff;
  border: 2px solid #99d1ff;
  border-radius: 4px;
}

.smooth-row {
  gap: 14px;
  padding: 16px 0 0 26px;
}

.toolbox-end {
  width: 128px;
  height: 183px;
  border-bottom: 2px solid #9f9f9f;
}

.gutter {
  flex: none;
  width: 14px;
  display: flex;
  align-items: center;
  background: linear-gradient(#858585, #b8b8b8);
  border-right: 2px solid #555;
  box-shadow: inset -3px 0 0 rgba(0, 0, 0, 0.2);
}

.right-gutter {
  padding-bottom: 4px;
  border-left: 2px solid #666;
}

.right-gutter button {
  width: 12px;
  height: 100px;
  border-top: 2px solid #666;
  border-bottom: 2px solid #666;
  background: #cecece;
}

.right-gutter button::after {
  content: "";
  border: 8px solid transparent;
  border-left-color: #fff;
  border-right: 0;
}

/* 文档窗口 */
.center {
  flex: 1;
  min-width: 0;
  display: flex;
  flex-direction: column;
  background: #858585;
}

.frame-top {
  height: 14px;
  background: linear-gradient(#858585 5px, #6a6a6a 12px, #555 12px);
}

.doc {
  flex: 1;
  display: flex;
  flex-direction: column;
  border-radius: 14px 14px 0 0;
  overflow: hidden;
  background: #efefef;
}

.doc-tabs {
  display: flex;
  align-items: flex-end;
  height: 48px;
  padding-left: 6px;
  background: #b7b7b7;
  border-bottom: 2px solid #fff;
}

.doc-tab {
  width: 130px;
  height: 34px;
  padding: 0 13px;
  line-height: 32px;
  white-space: nowrap;
  background: #efefef;
  clip-path: polygon(0 4px, 4px 0, 112px 0, 118px 8px, 130px 100%, 0 100%);
}

.doc-buttons {
  display: flex;
  gap: 14px;
  margin-left: auto;
  padding: 0 14px 13px 0;
}

.edit-bar {
  display: flex;
  align-items: center;
  height: 64px;
  padding: 0 3px 0 4px;
  background: linear-gradient(#efefef 52px, #d0d0d0 62px);
  border-bottom: 2px solid #9f9f9f;
}

.timeline-toggle {
  width: 120px;
  height: 42px;
  margin-right: 9px;
  color: #666;
  background: #cce8ff;
  border: 2px solid #99d1ff;
  border-radius: 4px;
}

.vline {
  width: 3px;
  height: 48px;
  background: #fff;
  border-left: 2px solid #9f9f9f;
}

.back {
  width: 61px;
  padding-right: 6px;
}

.scene-icon {
  margin: 0 7px 0 24px;
}

.drop {
  width: 54px;
  padding-left: 6px;
}

.drop i {
  align-self: flex-end;
  border: 5px solid transparent;
  border-top-color: #4c4600;
  border-bottom: 0;
}

.zoom-box {
  display: flex;
  align-items: center;
  width: 198px;
  height: 50px;
  margin-left: 9px;
  padding: 0 5px;
  justify-content: space-between;
  background: #fff;
  border: 2px solid #858585;
}

.zoom-box input {
  width: 67px;
  height: 34px;
  margin-bottom: 4px;
  color: #fff;
  background: #0078d7;
}

/* 时间轴 */
.timeline {
  display: flex;
  height: 213px;
  border-bottom: 3px solid #6a6a6a;
  box-shadow: inset 0 -4px 0 #efefef, inset 0 -6px 0 #fff;
}

.layers {
  width: 350px;
  height: 200px;
  display: flex;
  flex-direction: column;
  border-right: 2px solid #9f9f9f;
}

.layer-head,
.ruler {
  flex: none;
  height: 54px;
  background: linear-gradient(#efefef 42px, #d4d4d4 52px);
  border-bottom: 2px solid #9f9f9f;
}

.layer-head {
  display: flex;
  align-items: center;
  padding: 0 8px;
  gap: 7px;
}

.grip-v {
  width: 10px;
  height: 32px;
  margin-right: auto;
  background:
    linear-gradient(#efefef, #efefef) 4px 0 / 2px 100% no-repeat,
    repeating-linear-gradient(#888 0 2px, #fff 2px 4px);
}

.outline-box {
  width: 24px;
  height: 24px;
  border: 4px solid #000;
}

.layer-row {
  display: flex;
  align-items: center;
  height: 40px;
  margin-left: 2px;
  padding: 0 8px 0 37px;
  color: #fff;
  background: #6d6d6d;
  border-top: 2px solid #fff;
  border-bottom: 2px solid #9f9f9f;
}

.layer-name {
  flex: 1;
  margin-left: 10px;
}

.dot {
  width: 8px;
  height: 8px;
  margin-left: 30px;
  border-radius: 50%;
  background: #fff;
}

.dot + .dot {
  margin-right: 24px;
}

.dot:first-of-type {
  margin-left: 18px;
}

.layer-color {
  width: 22px;
  height: 22px;
  background: #50ff50;
  border: 2px solid #000;
}

.layer-space,
.frames-space {
  flex: 1;
  background: #f7f7f7;
}

.layer-foot {
  display: flex;
  align-items: center;
  height: 36px;
  padding: 0 15px 4px 9px;
  gap: 6px;
  border-top: 2px solid #fff;
}

.frames {
  flex: 1;
  min-width: 0;
  height: 200px;
  display: flex;
  flex-direction: column;
  margin-left: 8px;
  border-left: 2px solid #9f9f9f;
}

.frames-clip {
  position: relative;
  flex: 1;
  display: flex;
  flex-direction: column;
  overflow: hidden;
}

.ruler {
  display: flex;
  align-items: center;
  overflow: hidden;
  font-size: 23px;
  color: #6c6c6c;
  background:
    repeating-linear-gradient(90deg, transparent 0 14px, #9f9f9f 14px 16px) 0 2px / 100% 6px no-repeat,
    repeating-linear-gradient(90deg, transparent 0 14px, #9f9f9f 14px 16px) 0 44px / 100% 6px no-repeat,
    linear-gradient(#efefef 42px, #d4d4d4 52px);
}

.ruler span {
  flex: none;
  width: 80px;
}

.ruler .first {
  width: 63px;
}

.frame-cells {
  height: 40px;
  border-bottom: 2px solid #efefef;
  background:
    repeating-linear-gradient(90deg, transparent 0 14px, #efefef 14px 16px),
    repeating-linear-gradient(90deg, #fff 0 64px, #f7f7f7 64px 80px);
}

.keyframe {
  width: 16px;
  height: 40px;
  padding: 24px 0 0 2px;
  background: #fff;
  border-right: 2px solid #000;
  border-bottom: 2px solid #000;
}

.keyframe b {
  display: block;
  width: 10px;
  height: 10px;
  border: 2px solid #000;
  border-radius: 50%;
}

.playhead {
  position: absolute;
  inset: 2px auto 0 0;
  width: 16px;
  background: linear-gradient(#c00, #c00) 6px 50px / 2px 100% no-repeat;
}

.playhead::before {
  content: "";
  display: block;
  height: 50px;
  background: rgba(255, 110, 110, 0.6);
  border: 2px solid #c00;
}

.frames-foot {
  display: flex;
  align-items: flex-start;
  height: 36px;
  padding-left: 2px;
}

.foot-btn {
  width: 32px;
  height: 32px;
  margin-top: 2px;
  border: 2px solid #fff;
  border-right-color: #9f9f9f;
  border-bottom-color: #9f9f9f;
}

.foot-btn.gap {
  margin-left: 10px;
}

.readout {
  width: 70px;
  height: 36px;
  margin-left: 9px;
  font-size: 23px;
  line-height: 32px;
  text-align: center;
  border: 2px solid #9f9f9f;
  border-right-color: #fff;
  border-bottom-color: #fff;
}

.fps-no {
  width: 113px;
}

.time-no {
  width: 97px;
}

.h-track {
  flex: 1;
  margin-left: 9px;
  padding: 16px 0 0 34px;
  border-top: 2px solid #9f9f9f;
  box-shadow: inset 0 2px 0 #fff;
}

.h-thumb {
  width: 216px;
  height: 4px;
  background: #858585;
}

.v-thumb {
  width: 4px;
  background: #858585;
}

.timeline-side {
  width: 36px;
  padding: 14px 0 0 4px;
  border-left: 2px solid #9f9f9f;
  border-image: linear-gradient(#9f9f9f 54px, #f7f7f7 54px) 2;
}

.timeline-side .v-thumb {
  height: 42px;
  margin: 48px 0 0 11px;
}

/* 舞台 */
.stage-row {
  flex: 1;
  display: flex;
}

.stage {
  flex: 1;
  display: flex;
  padding: 111px 522px 31px 504px;
  background: #cfcfcf;
}

.page {
  flex: 1;
  background: #fff;
}

.v-scroll {
  width: 34px;
  display: flex;
  justify-content: center;
  align-items: center;
  padding-bottom: 16px;
  border-left: 2px solid #fff;
}

.v-scroll .v-thumb {
  height: 224px;
}

.h-scroll {
  height: 36px;
  display: flex;
  align-items: center;
  padding: 0 542px 0 518px;
  border-top: 2px solid #fff;
}

.h-scroll .h-thumb {
  flex: 1;
}

.splitter {
  display: flex;
  justify-content: center;
  height: 14px;
  background: linear-gradient(#6a6a6a 2px, #909090 2px 4px, #b5b5b5 4px);
}

.splitter button {
  width: 100px;
  background: #d0d0d0;
  border: 2px solid #777;
  border-width: 0 2px;
}

.splitter button::after {
  content: "";
  border: 8px solid transparent;
  border-top-color: #fff;
  border-bottom: 0;
}

/* 面板标题 */
.panel-head {
  display: flex;
  align-items: center;
  height: 40px;
  padding-left: 8px;
  color: #fff;
  background: linear-gradient(#000 2px, #b8b8b8 2px 4px, #000 4px 20px, #555 36px, #a0a0a0 36px 38px, #888 38px);
}

.panel-head h2 {
  align-self: flex-start;
  margin-left: 8px;
  line-height: 36px;
}

.panel-head em {
  align-self: flex-end;
  width: 10px;
  height: 8px;
  margin-bottom: 10px;
  background: repeating-linear-gradient(45deg, #000 0 2px, transparent 2px 4px);
}

.tri {
  width: 0;
  margin-bottom: 2px;
}

.tri.right {
  margin-left: 14px;
  margin-right: 4px;
  border: 9px solid transparent;
  border-width: 9px 0 9px 11px;
  border-left-color: #fff;
}

.tri.down {
  margin-left: 10px;
  border: 9px solid transparent;
  border-width: 12px 9px 0;
  border-top-color: #fff;
}

.head-menu {
  margin: 0 8px 0 auto;
  color: #d8d8d8;
}

.prop-tab {
  width: 77px;
}

.prop-tab.active {
  align-self: flex-end;
  width: 80px;
  height: 34px;
  margin-left: 13px;
  padding: 0 6px 2px 0;
  color: #000;
  background: #efefef;
  clip-path: polygon(0 4px, 4px 0, 64px 0, 70px 8px, 100% 100%, 0 100%);
}

.tab-line {
  width: 3px;
  height: 26px;
  background: #b8b8b8;
}

/* 属性面板 */
.props {
  background: #efefef;
}

.props-top,
.props-bottom {
  display: flex;
}

.props-top {
  height: 122px;
  border-bottom: 2px solid #9f9f9f;
}

.props-bottom {
  height: 106px;
}

.doc-info {
  flex: none;
  display: flex;
  width: 339px;
  padding-left: 10px;
  border-right: 3px solid #9f9f9f;
}

.props-top .doc-info {
  margin-top: 10px;
}

.props-bottom .doc-info {
  margin-bottom: 4px;
}

.doc-logo {
  width: 72px;
  height: 72px;
  margin-top: 4px;
  background: #e8e8e8;
  border: 2px solid #000;
  border-right-color: #fff;
  border-bottom-color: #fff;
}

.doc-logo svg {
  fill: #707070;
}

.doc-names {
  display: flex;
  flex-direction: column;
  margin-left: 37px;
  padding-top: 3px;
  line-height: 52px;
}

.settings {
  flex: 1;
  padding: 14px 0 0 42px;
}

.set-row {
  display: flex;
  align-items: center;
  height: 52px;
  white-space: nowrap;
}

.set-row.device {
  height: 40px;
}

.set-label {
  width: 77px;
}

.push {
  width: 222px;
  height: 38px;
  gap: 6px;
  background: #fdfdfd;
  border: 2px solid #d0d0d0;
  border-bottom-color: #b5b5b5;
  border-radius: 6px;
}

.push.pressed {
  background: #d4d4d4;
  border-color: #a8a8a8;
  box-shadow: 0 0 0 2px #c8c8c8;
}

.bg-label {
  width: 68px;
  margin-left: 48px;
}

.fps-label {
  width: 65px;
  margin-left: 51px;
}

.set-row input {
  width: 75px;
  height: 46px;
  padding: 0 6px 12px;
  font-size: 20px;
  background: #fff;
  border: 2px solid #e8e8e8;
  border-bottom-color: #858585;
}

.fps-unit {
  margin-left: 25px;
}

.player {
  width: 91px;
  margin-left: 24px;
}

.player-no {
  width: 38px;
}

.as {
  width: 142px;
}

.as-no {
  width: 54px;
}

.profile {
  width: 122px;
}

.side-icon {
  width: 26px;
  height: 26px;
  margin: 8px 8px 0 0;
  font-size: 20px;
  font-weight: 700;
  border: 2px solid #444;
  border-radius: 50%;
}

.side-col {
  display: flex;
  flex-direction: column;
  justify-content: space-between;
  align-items: flex-end;
  padding: 5px 7px 7px 0;
}

/* 右侧面板 */
.panels {
  flex: none;
  width: 416px;
  display: flex;
  flex-direction: column;
}

.align-tabs {
  display: flex;
  align-items: center;
  height: 38px;
  padding: 0 2px;
  color: #fff;
  background: #b7b7b7;
}

.align-tabs button {
  width: 76px;
}

.align-tabs .active {
  align-self: flex-end;
  width: 80px;
  height: 34px;
  padding-right: 8px;
  color: #000;
  background: #efefef;
  clip-path: polygon(0 4px, 4px 0, 64px 0, 70px 8px, 100% 100%, 0 100%);
}

.align-tabs .tab-line {
  background: #fff;
  border-left: 2px solid #888;
}

.align-body {
  display: flex;
  height: 263px;
}

.align-left {
  width: 310px;
  padding: 8px 0 0 10px;
}

.align-group {
  height: 80px;
}

.align-label {
  display: flex;
  margin-bottom: 10px;
  padding-left: 2px;
}

.align-label span:first-child {
  width: 152px;
}

.align-icons {
  display: flex;
}

.align-icons button {
  width: 50px;
}

.align-right {
  flex: 1;
  margin: 42px 0 10px;
  padding: 20px 0 0 12px;
  border-left: 2px solid #9f9f9f;
  box-shadow: inset 2px 0 0 #fff;
}

.align-right p {
  line-height: 26px;
}

.align-right button {
  width: 48px;
  height: 36px;
  margin-top: 8px;
  padding-top: 2px;
  background: #fff;
  border: 2px solid #99d1ff;
  border-radius: 4px;
}

.lib-bar {
  display: flex;
  align-items: center;
  height: 58px;
  padding: 0 13px 0 8px;
  justify-content: space-between;
}

.lib-buttons {
  display: flex;
  gap: 26px;
}

.lib-select {
  display: flex;
  align-items: center;
  width: 300px;
  height: 41px;
  padding-right: 6px;
  background: #fdfdfd;
  border: 2px solid #d0d0d0;
  border-radius: 3px;
}

.lib-select select {
  flex: 1;
  height: 36px;
  padding-left: 5px;
  appearance: none;
}

.lib-status {
  height: 39px;
  padding-left: 6px;
  line-height: 36px;
  border-top: 2px solid #9f9f9f;
  border-left: 2px solid #9f9f9f;
  border-bottom: 2px solid #fff;
}

.lib-preview {
  height: 180px;
  margin: 0 2px 0 1px;
  background: #c0c0c0;
  border: 2px solid #fff;
  border-top-color: #6a6a6a;
  border-left-color: #6a6a6a;
}

.lib-list {
  flex: 1;
  display: flex;
  margin-top: 9px;
}

.lib-table {
  flex: 1;
  background: #fff;
}

.lib-table table {
  width: 100%;
  border-collapse: collapse;
  table-layout: fixed;
}

.lib-table th {
  height: 33px;
  padding: 0 0 0 8px;
  font-weight: 400;
  line-height: 28px;
  text-align: left;
  background: #efefef;
  border-top: 2px solid #9f9f9f;
  border-bottom: 2px solid #000;
}

.lib-table .type {
  width: 86px;
  padding-left: 6px;
  border-left: 2px solid #000;
}

.lib-side {
  width: 31px;
}

.lib-side button {
  width: 31px;
  height: 32px;
  padding-right: 2px;
  border: 2px solid #fff;
  border-right-color: #9f9f9f;
  border-bottom-color: #9f9f9f;
}

.thin-thumb {
  width: 2px;
  height: 34px;
  margin: 34px 0 0 15px;
  background: #858585;
}

.lib-foot {
  display: flex;
  align-items: center;
  height: 36px;
  padding-left: 4px;
}

/* 任务栏 */
.taskbar {
  display: flex;
  align-items: center;
  height: 98px;
  padding: 0 0 2px 42px;
  background: #cfe5ec;
  border-top: 2px solid #fff;
}

.search {
  width: 196px;
  height: 60px;
  margin-left: 30px;
  padding-right: 4px;
  gap: 8px;
  background: #f2f8fb;
  border-radius: 30px;
}

.search svg,
.tray svg {
  fill: none;
  stroke: #111;
  stroke-width: 2;
}

.apps {
  display: flex;
  gap: 12px;
  margin-left: 14px;
}

.apps button {
  position: relative;
  width: 76px;
  height: 76px;
  border-radius: 8px;
}

.apps .current {
  background: #e8f3f8;
}

.running::after,
.current::after {
  content: "";
  position: absolute;
  bottom: 0;
  width: 12px;
  height: 6px;
  border-radius: 3px;
  background: #788890;
}

.current::after {
  width: 32px;
  background: #557c88;
}

.tray {
  display: flex;
  align-items: center;
  padding-right: 39px;
}

.t-key {
  margin-left: 43px;
}

.t-pad {
  margin-left: 47px;
}

.t-net {
  gap: 15px;
  margin-left: 41px;
}

.clock {
  display: flex;
  flex-direction: column;
  width: 145px;
  font-size: 22px;
  line-height: 32px;
  text-align: right;
}

.moon {
  margin-left: 17px;
}

.ime {
  position: absolute;
  right: 1px;
  bottom: 96px;
  display: flex;
  align-items: center;
  width: 305px;
  height: 52px;
  padding: 0 0 2px 14px;
  color: #3f4fa5;
  background: #fff;
  border: 2px solid #b8cae4;
}

.ime button {
  width: 48px;
  font-size: 30px;
  font-weight: 700;
}

.ime svg {
  fill: #3f4fa5;
}

.ime .ime-logo {
  position: absolute;
  left: -52px;
  bottom: -4px;
  width: 64px;
  height: 64px;
}

.watermark {
  position: absolute;
  right: 13px;
  bottom: 6px;
  font-size: 20px;
  color: #e8eef0;
  text-shadow: 1px 1px 1px #555;
}
</style>
